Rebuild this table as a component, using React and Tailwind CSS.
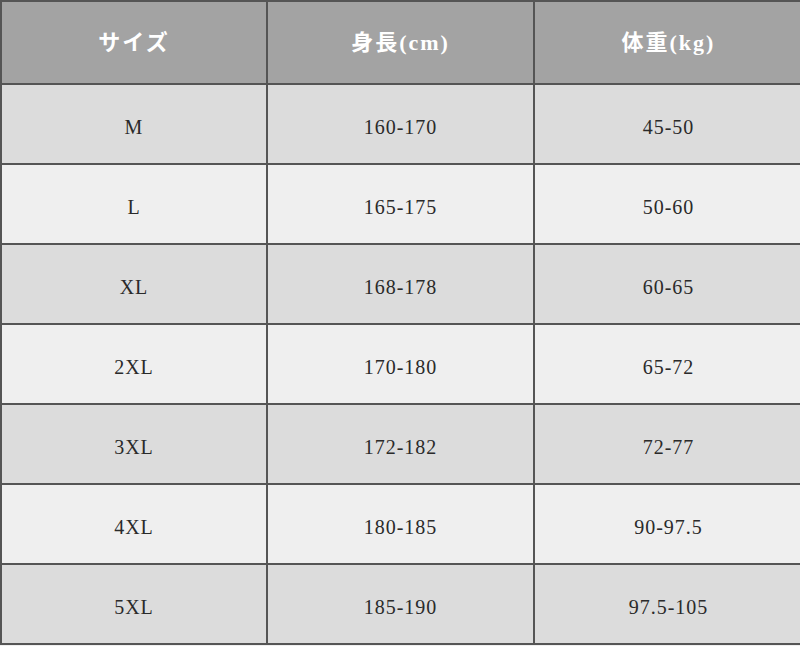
import React from 'react';

const rows = [
  ['M', '160-170', '45-50'],
  ['L', '165-175', '50-60'],
  ['XL', '168-178', '60-65'],
  ['2XL', '170-180', '65-72'],
  ['3XL', '172-182', '72-77'],
  ['4XL', '180-185', '90-97.5'],
  ['5XL', '185-190', '97.5-105'],
];

const headers = ['サイズ', '身長(cm)', '体重(kg)'];

const App = () => {
  return (
    <div className="w-[800px] h-[646px] bg-[#efefef] overflow-hidden">
      <div className="grid grid-cols-[266px_267px_267px] border-t-2 border-l-2 border-[#555555]">
        {/* Header */}
        {headers.map((h, i) => (
          <div
            key={h}
            className={`h-[83px] flex items-center justify-center bg-[#a3a3a3] border-b-2 border-[#555555] ${i < 2 ? 'border-r-2' : ''}`}
          >
            <span className="text-white text-[22px] font-bold tracking-[2px] font-['Liberation_Serif','Noto_Sans_CJK_JP',serif]">
              {h}
            </span>
          </div>
        ))}

        {/* Body */}
        {rows.map((row, r) =>
          row.map((cell, c) => (
            <div
              key={`${r}-${c}`}
              className={`h-[80px] flex items-center justify-center pt-[6px] border-b-2 border-[#555555] ${c < 2 ? 'border-r-2' : ''} ${r % 2 === 0 ? 'bg-[#dcdcdc]' : 'bg-[#efefef]'}`}
            >
              <span className="text-[#2a2a2a] text-[20px] tracking-[1px] font-['Liberation_Serif',serif]">
                {cell}
              </span>
            </div>
          ))
        )}
      </div>
    </div>
  );
};

export default App;
